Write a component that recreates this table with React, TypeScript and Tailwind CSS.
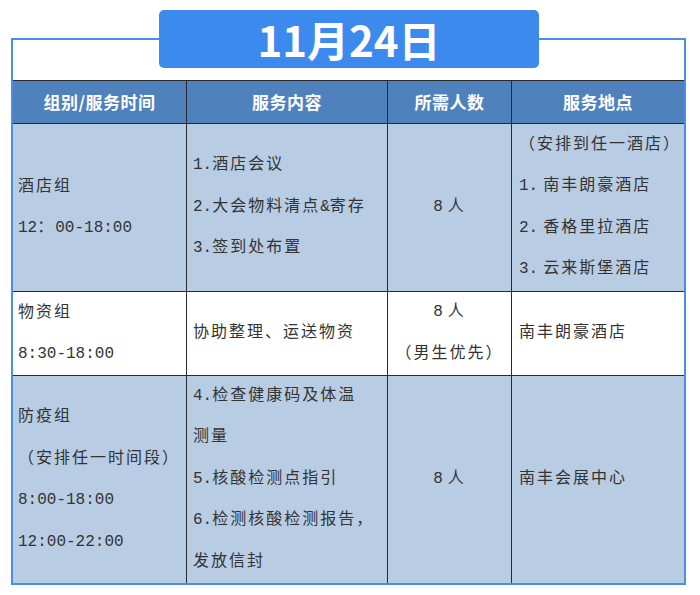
import React from 'react';

const cjk = '"Liberation Mono", "Noto Sans CJK SC", monospace';

// split a line into ascii / cjk runs so only the CJK gets wide tracking
function T({ s }: { s: string }) {
  const parts = s.match(/[\x00-\x7f]+|[^\x00-\x7f]+/g) || [];
  return (
    <>
      {parts.map((p, i) =>
        /^[\x00-\x7f]+$/.test(p) ? (
          p.endsWith(' ') && p.trim() !== '' ? (
            <span key={i} className="tracking-normal mr-[5px]">
              {p.trimEnd()}
            </span>
          ) : (
            <span key={i} className="tracking-normal">
              {p}
            </span>
          )
        ) : (
          <span key={i} className="tracking-[2px]">
            {p}
          </span>
        )
      )}
    </>
  );
}

function Lines({ items, center }: { items: string[]; center?: boolean }) {
  return (
    <div className={center ? 'flex flex-col items-center' : 'flex flex-col'}>
      {items.map((l, i) => (
        <div key={i} className="leading-[41.5px] whitespace-nowrap">
          <T s={l} />
        </div>
      ))}
    </div>
  );
}

const rows = [
  {
    bg: 'bg-[#b8cce4]',
    h: 'h-[167px]',
    group: ['酒店组', '12：00-18:00'],
    content: ['1.酒店会议', '2.大会物料清点&寄存', '3.签到处布置'],
    people: ['8 人'],
    place: ['（安排到任一酒店）', '1. 南丰朗豪酒店', '2. 香格里拉酒店', '3. 云来斯堡酒店'],
  },
  {
    bg: 'bg-white',
    h: 'h-[83px]',
    group: ['物资组', '8:30-18:00'],
    content: ['协助整理、运送物资'],
    people: ['8 人', '（男生优先）'],
    place: ['南丰朗豪酒店'],
  },
  {
    bg: 'bg-[#b8cce4]',
    h: 'h-[207px]',
    group: ['防疫组', '（安排任一时间段）', '8:00-18:00', '12:00-22:00'],
    content: ['4.检查健康码及体温', '测量', '5.核酸检测点指引', '6.检测核酸检测报告，', '发放信封'],
    people: ['8 人'],
    place: ['南丰会展中心'],
  },
];

export default function App() {
  return (
    <div className="relative w-[700px] h-[595px] bg-white overflow-hidden">
      <div className="ml-[11px] mt-[38px] w-[675px] border-2 border-[#4a8fe3]">
        <div className="h-[40px] bg-white" />
        <div className="grid grid-cols-[173px_201px_124px_173px] border-t border-[#2a2a2a]">
          {['组别/服务时间', '服务内容', '所需人数', '服务地点'].map((h, i) => (
            <div
              key={h}
              className={
                'h-[42px] bg-[#4f81bd] flex items-center justify-center text-white font-bold text-[17px] tracking-[0.5px] ' +
                (i > 0 ? 'border-l border-[#2a2a2a]' : '')
              }
              style={{ fontFamily: '"Noto Sans CJK SC", sans-serif' }}
            >
              {h}
            </div>
          ))}
        </div>
        {rows.map((r, ri) => (
          <div
            key={ri}
            className={'grid grid-cols-[173px_201px_124px_173px] border-t border-[#2a2a2a] text-[16px] text-[#333] ' + r.bg}
            style={{ fontFamily: cjk }}
          >
            <div className={'flex items-center pl-[5px] pt-[1px] ' + r.h}>
              <Lines items={r.group} />
            </div>
            <div className={'flex items-center pl-[6px] border-l border-[#2a2a2a] ' + r.h}>
              <Lines items={r.content} />
            </div>
            <div className={'flex items-center justify-center border-l border-[#2a2a2a] ' + r.h}>
              <Lines items={r.people} center />
            </div>
            <div className={'flex items-center pl-[7px] border-l border-[#2a2a2a] ' + r.h}>
              <Lines items={r.place} />
            </div>
          </div>
        ))}
      </div>
      <div
        className="absolute left-[159px] top-[10px] w-[380px] h-[58px] rounded-[5px] bg-[#3d8aee] flex items-center justify-center text-white font-bold text-[42px] leading-none"
        style={{ fontFamily: '"Noto Sans CJK SC", sans-serif' }}
      >
        11月24日
      </div>
    </div>
  );
}
